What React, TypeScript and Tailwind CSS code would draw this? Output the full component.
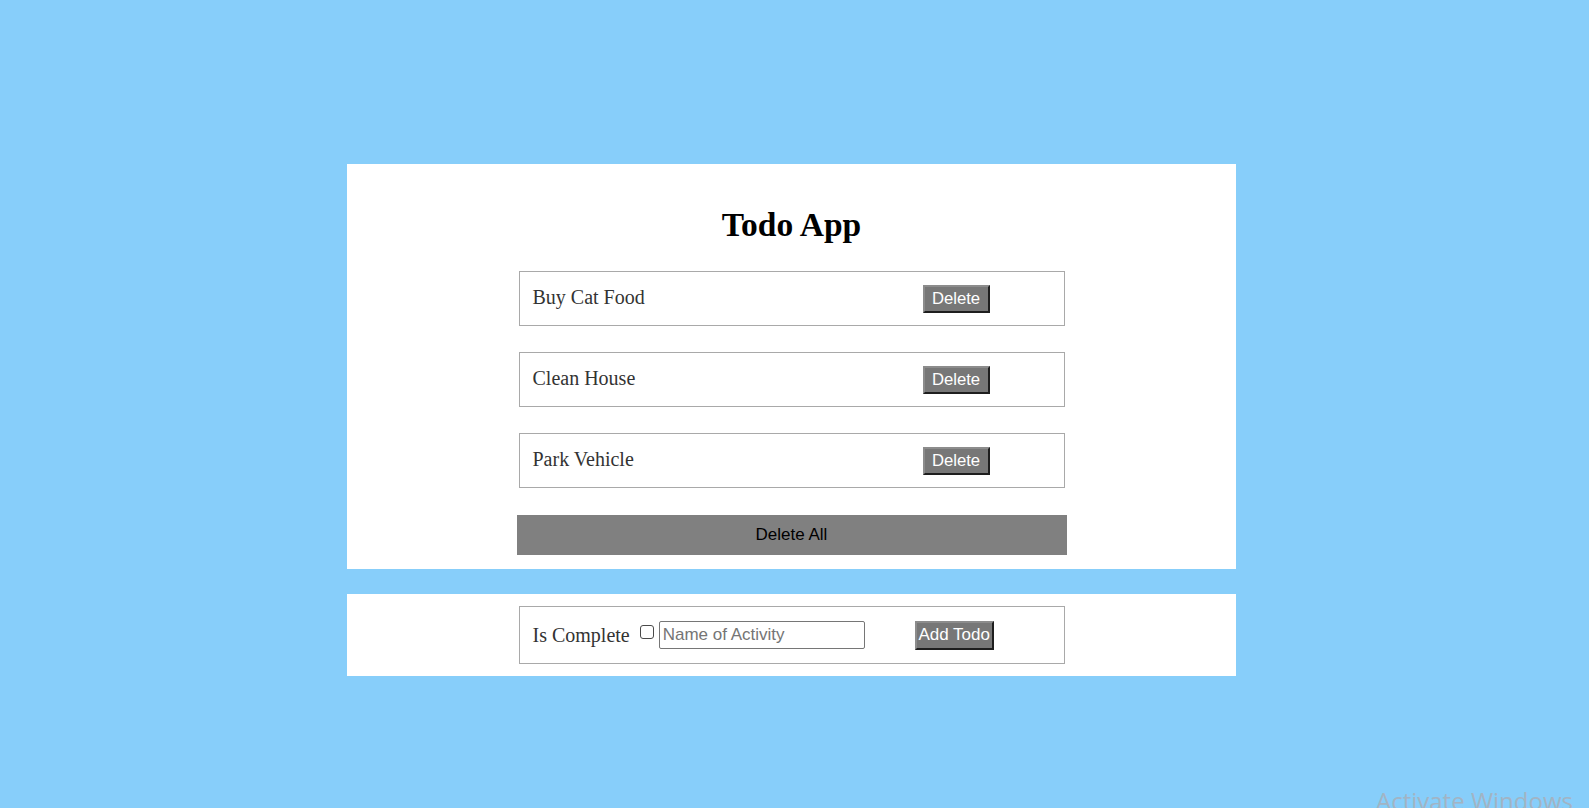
import React from "react";

const todos = ["Buy Cat Food", "Clean House", "Park Vehicle"];

function DeleteButton() {
  return (
    <button className="h-[28px] w-[67px] border-2 border-t-[#8c8c8c] border-l-[#8c8c8c] border-b-[#1e1e1e] border-r-[#1e1e1e] bg-[#777777] font-['Liberation_Sans',Arial,sans-serif] text-[16.7px] leading-[18px] text-white">
      Delete
    </button>
  );
}

function TodoRow({ name }: { name: string }) {
  return (
    <li className="flex h-[55px] w-[546px] items-center border border-[#a9a9a9] pl-[13px]">
      <span className="w-[390px] pb-[3px] font-['Liberation_Serif','Times_New_Roman',serif] text-[20px] leading-[23px] text-[#333333]">
        {name}
      </span>
      <DeleteButton />
    </li>
  );
}

export default function App() {
  return (
    <div className="relative min-h-screen overflow-hidden bg-[#87cefa] pt-[164px]">
      <div className="flex flex-col items-center pr-[6px]">
        <section className="flex w-[889px] flex-col items-center bg-white pt-[42px] pb-[14px]">
          <h1 className="font-['Liberation_Serif','Times_New_Roman',serif] text-[33.5px] font-bold leading-[38px] text-black">
            Todo App
          </h1>
          <ul className="mt-[27px] flex flex-col gap-[26px]">
            {todos.map((t) => (
              <TodoRow key={t} name={t} />
            ))}
          </ul>
          <button className="mt-[27px] h-[40px] w-[550px] bg-[#808080] font-['Liberation_Sans',Arial,sans-serif] text-[17px] text-black">
            Delete All
          </button>
        </section>

        <section className="mt-[25px] flex w-[889px] justify-center bg-white py-[12px]">
          <form className="flex h-[58px] w-[546px] items-center border border-[#a9a9a9] pl-[13px]">
            <label className="font-['Liberation_Serif','Times_New_Roman',serif] text-[20px] leading-[23px] text-[#333333]">
              Is Complete
            </label>
            <input type="checkbox" className="mb-[7px] ml-[10px] h-[14px] w-[14px] appearance-none rounded-[3px] border border-[#4a4a4a] bg-white" />
            <input
              type="text"
              placeholder="Name of Activity"
              className="ml-[5px] h-[28px] w-[206px] rounded-[2px] border border-[#767676] px-[3px] font-['Liberation_Sans',Arial,sans-serif] text-[17px] text-black placeholder:text-[#757575]"
            />
            <button
              type="button"
              className="ml-[50px] h-[29px] w-[79px] border-2 border-t-[#8c8c8c] border-l-[#8c8c8c] border-b-[#1e1e1e] border-r-[#1e1e1e] bg-[#777777] font-['Liberation_Sans',Arial,sans-serif] text-[17px] leading-[18px] text-white"
            >
              Add Todo
            </button>
          </form>
        </section>
      </div>

      <div className="absolute left-[1376px] top-[789px] font-['Open_Sans','Noto_Sans',sans-serif] text-[24px] leading-none text-[#a2b4c4]">
        Activate Windows
      </div>
    </div>
  );
}
